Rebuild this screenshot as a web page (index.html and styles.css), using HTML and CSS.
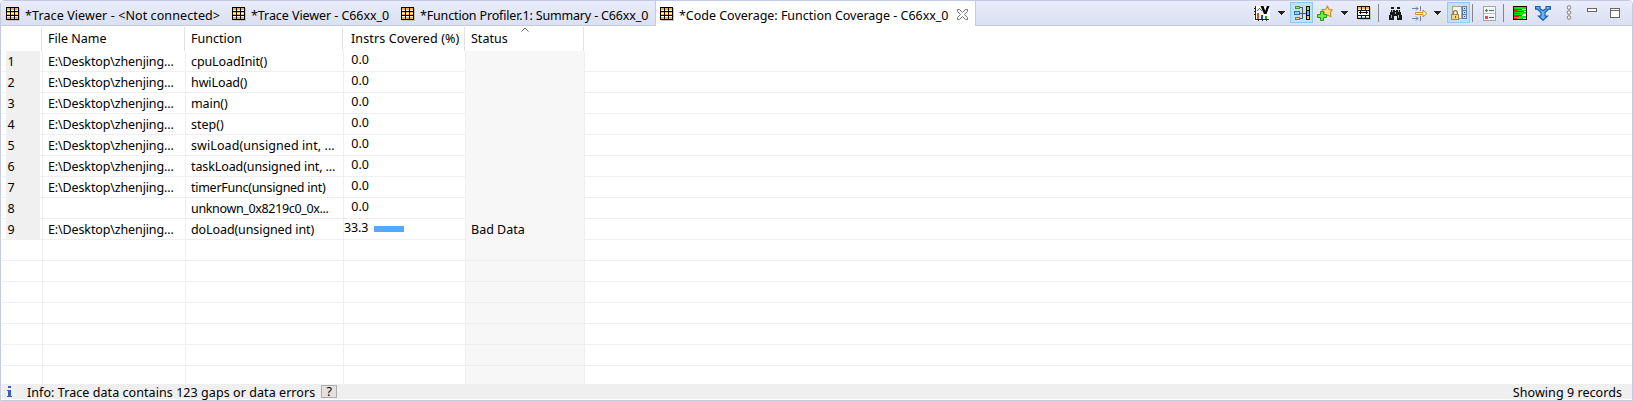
FILE: index.html
```html
<!DOCTYPE html>
<html lang="en">
<head>
<meta charset="utf-8">
<title>Code Coverage</title>
<link rel="stylesheet" href="styles.css">
</head>
<body>
<svg width="0" height="0" class="defs">
  <symbol id="table" viewBox="0 0 15 15"><path fill="#c9c3ba" d="M1 1h13v13H1z"/><path fill="#000" d="M0 0h13v13H0z"/><path fill="#fff" d="M1 1h3v3H1zM5 1h3v3H5zM9 1h3v3H9zM1 5h3v3H1zM5 5h3v3H5zM9 5h3v3H9zM1 9h3v3H1zM5 9h3v3H5zM9 9h3v3H9z"/><path fill="#f6b044" d="M1 1h3v2H1zM5 1h3v2H5zM9 1h3v2H9zM1 5h3v1H1zM5 5h3v1H5zM9 5h3v1H9zM1 7h3v1H1zM5 7h3v1H5zM9 7h3v1H9zM1 10h3v2H1zM5 10h3v2H5zM9 10h3v2H9z"/></symbol>
  <symbol id="down" viewBox="0 0 7 4"><path fill="#222" d="M0 0h7v1H6v1H5v1H4v1H3V3H2V2H1V1H0z"/></symbol>
</svg>
<div class="view">
  <div class="tabbar">
    <div class="tab t1"><svg class="ticon"><use href="#table"/></svg><span>*Trace Viewer - &lt;Not connected&gt;</span></div>
    <div class="tab t2"><svg class="ticon"><use href="#table"/></svg><span>*Trace Viewer - C66xx_0</span></div>
    <div class="tab t3"><svg class="ticon"><use href="#table"/></svg><span>*Function Profiler.1: Summary - C66xx_0</span></div>
    <div class="tab t4 active"><svg class="ticon"><use href="#table"/></svg><span>*Code Coverage: Function Coverage - C66xx_0</span>
      <svg class="close" viewBox="0 0 11 11"><path d="M.5.5h2l3 3 3-3h2v2l-3 3 3 3v2h-2l-3-3-3 3h-2v-2l3-3-3-3z" fill="#fff" stroke="#777"/></svg></div>
    <div class="tools">
      <svg class="i16 chart" viewBox="0 0 16 16"><path fill="#fff" d="M0 1h16v15H0z"/><path fill="#222" d="M1 1h1v13h13v1H1zM0 3h1v1H0zM0 6h1v1H0zM0 9h1v1H0zM4 15h1v1H4zM8 15h1v1H8zM12 15h1v1h-1z"/><path fill="#f04a10" d="M3 8h2v6H3z"/><path fill="#1648e8" d="M7 10h2v4H7z"/><path fill="#14b414" d="M11 11h2v3h-2z"/><path d="M2.500 6.500l3-3 3 3" fill="none" stroke="#3860a8"/><path class="smooth" fill="#000" d="M6.500 1h3l1.700 5L13 1h2.500l-3 8h-2.500z"/></svg>
      <svg class="arrow a1"><use href="#down"/></svg>
      <span class="pressed p1"><svg class="i16" viewBox="0 0 16 16"><path fill="none" stroke="#4a5560" d="M5 2.500h3.500v11H5M5 8.500h7"/><path fill="#3c9c28" d="M1 1h5v3H1z"/><path fill="#b8e060" d="M2 2h3v1H2z"/><path fill="#2878b0" d="M0 6h6v4H0z"/><path fill="#8bd4ff" d="M1 7h4v2H1z"/><path fill="#a47808" d="M1 12h5v3H1z"/><path fill="#ffe052" d="M2 13h3v1H2z"/><path fill="#111" d="M12 1h4v14h-4z"/><path fill="#84e058" d="M13 2h2v3h-2z"/><path fill="#57b6ff" d="M13 6h2v4h-2z"/><path fill="#ffd328" d="M13 11h2v3h-2z"/></svg></span>
      <svg class="i16 star smooth" viewBox="0 0 16 16"><path d="M10.500 1.200l1.500 3.300 3.200.5-2 2.800.8 3.900-3.500-1.500-3.500 1.500.4-4-2.500-3 3.800-.5z" fill="#ffe28a" stroke="#d38c1c" stroke-width="1.100"/><path d="M3.500 6.500h3v3h3v3h-3v3h-3v-3h-3v-3h3z" fill="#74e84d" stroke="#209a16"/></svg>
      <svg class="arrow a2"><use href="#down"/></svg>
      <svg class="i16 film" viewBox="0 0 16 16"><path fill="#c9c3ba" d="M1 1h13v13H1z"/><path fill="#111" d="M0 0h13v13H0z"/><path fill="#fff" d="M1 1h3v3H1zM5 1h3v3H5zM9 1h3v3H9zM1 10h3v2H1zM5 10h3v2H5zM9 10h3v2H9z"/><path fill="#f8b652" d="M1 1h3v2H1zM5 1h3v2H5zM9 1h3v2H9zM1 11h3v1H1zM5 11h3v1H5zM9 11h3v1H9z"/><path fill="#fff" d="M1 5h11v4H1z"/><path fill="#111" d="M2 6h9v1H2zM3 5h1v3H3zM9 5h1v3H9z"/></svg>
      <i class="sep s1"></i>
      <svg class="i16 bino" viewBox="0 0 16 16"><path fill="#181818" d="M2 0h3v2H2zM8 0h3v2H8zM2 3h4v1h1V3h4v2h1v3h1v5H8V9H5v4H0V8h1V5h1z"/><path fill="#aaa" d="M3 3h1v2H3zM9 3h1v2H9zM2 8h1v3H2zM9 8h1v3H9zM6 5h1v2H6z"/></svg>
      <svg class="i16 step smooth" viewBox="0 0 16 16"><path d="M0 3.500h6M0 13.500h6M4 1.500l2 2-2 2M4 11.500l2 2-2 2M8.500 1v5M8.500 11v5" fill="none" stroke="#70849c"/><path d="M3.500 7.500h7.500V5l4 3.500-4 3.500V9.500H3.500z" fill="#fff2b0" stroke="#c8912a"/></svg>
      <svg class="arrow a3"><use href="#down"/></svg>
      <span class="pressed p2"><svg class="i16" viewBox="0 0 16 16"><path fill="#a8a48c" d="M1 1h15v13H1z"/><path fill="#eef4fc" d="M2 2h8v11H2z"/><path fill="#fbfdff" d="M2 6h8v7H2z"/><path fill="#5f7ea8" d="M11 1h5v13h-5z"/><path fill="#c8dcf2" d="M12 2h3v3h-3zM12 6h3v3h-3zM12 10h3v3h-3z"/><path fill="#2d4a78" d="M13 3h1v1h-1zM13 7h1v1h-1zM13 11h1v1h-1z"/><path class="smooth" d="M2.500 9V7.500a1.900 1.900 0 0 1 3.800 0V9" fill="none" stroke="#a87020" stroke-width="1.300"/><path fill="#b88428" d="M0 9h8v6H0z"/><path fill="#f7d478" d="M1 10h6v4H1z"/><path fill="#805416" d="M4 11h1v2H4z"/></svg></span>
      <i class="sep s2"></i>
      <svg class="i16 list" viewBox="0 0 16 16"><path fill="#fff" stroke="#a9a68c" d="M.5.500h12v14H.5z"/><path fill="#b9bcae" d="M1 7h11v1H1z"/><path fill="#e8f1f8" d="M2 2h9v4H2zM2 9h9v5H2z"/><path fill="#36934a" d="M2 4h3v1H2zM3 3h1v3H3z"/><path fill="#d95448" d="M2 10h3v3H2z"/><path fill="#52697f" d="M6 4h5v1H6zM6 11h5v1H6z"/></svg>
      <i class="sep s3"></i>
      <svg class="i16 cover" viewBox="0 0 16 16"><path fill="#000" d="M0 0h14v14H0z"/><path fill="#00ec00" d="M1 1h12v12H1z"/><path fill="#f01818" d="M1 3h8v1H1zM1 4h3v1H1zM1 5h10v1H1zM1 7h6v1H1zM1 9h8v1H1zM1 10h5v1H1zM1 12h3v1H1z"/><path fill="#fff" d="M9 3h4v1H9zM11 5h2v1h-2zM10 8h3v1h-3zM9 9h4v1H9zM10 12h3v1h-3z"/></svg>
      <svg class="i16 fork smooth" viewBox="0 0 16 16"><path d="M.6 1.500h4.400v2.300L8 5.500l3-1.700V1.500h4.400v2.700h-2L10 7.500V11h2.500L8 15.300 3.500 11H6V7.500L2.600 4.200h-2z" fill="#66b9f8" stroke="#1b5da8" stroke-width="1.200"/></svg>
      <svg class="dots smooth" viewBox="0 0 6 15"><g fill="#fff" stroke="#777"><circle cx="3" cy="2.500" r="1.800"/><circle cx="3" cy="7.500" r="1.800"/><circle cx="3" cy="12.500" r="1.800"/></g></svg>
      <svg class="min" viewBox="0 0 10 4"><path d="M.5.500h9v3h-9z" fill="#fff" stroke="#666"/></svg>
      <svg class="max" viewBox="0 0 10 10"><path d="M.5.500h9v9h-9zM1 2.500h8" fill="#fff" stroke="#666"/></svg>
    </div>
  </div>
  <div class="thead">
    <div></div><div><span>File Name</span></div><div><span class="w-fn">Function</span></div><div><span class="w-ins">Instrs Covered (%)</span></div>
    <div><span>Status</span><svg class="sort" viewBox="0 0 8 5"><path d="M.5 4.500L4 1l3.500 3.500" fill="none" stroke="#666"/></svg></div>
  </div>
  <div class="tbody">
    <div class="row"><b>1</b><div class="file">E:\Desktop\zhenjing...</div><div class="k1">cpuLoadInit()</div><div class="num"><span>0.0</span></div><div></div></div>
    <div class="row"><b>2</b><div class="file">E:\Desktop\zhenjing...</div><div class="k1">hwiLoad()</div><div class="num"><span>0.0</span></div><div></div></div>
    <div class="row"><b>3</b><div class="file">E:\Desktop\zhenjing...</div><div class="k1">main()</div><div class="num"><span>0.0</span></div><div></div></div>
    <div class="row"><b>4</b><div class="file">E:\Desktop\zhenjing...</div><div>step()</div><div class="num"><span>0.0</span></div><div></div></div>
    <div class="row"><b>5</b><div class="file">E:\Desktop\zhenjing...</div><div class="k0">swiLoad(unsigned int, ...</div><div class="num"><span>0.0</span></div><div></div></div>
    <div class="row"><b>6</b><div class="file">E:\Desktop\zhenjing...</div><div class="k1">taskLoad(unsigned int, ...</div><div class="num"><span>0.0</span></div><div></div></div>
    <div class="row"><b>7</b><div class="file">E:\Desktop\zhenjing...</div><div class="k2">timerFunc(unsigned int)</div><div class="num"><span>0.0</span></div><div></div></div>
    <div class="row"><b>8</b><div></div><div class="k3">unknown_0x8219c0_0x...</div><div class="num"><span>0.0</span></div><div></div></div>
    <div class="row"><b>9</b><div class="file">E:\Desktop\zhenjing...</div><div class="k1">doLoad(unsigned int)</div><div class="num wide"><span>33.3</span><i class="bar" style="width:30px"></i></div><div>Bad Data</div></div>
    <div class="row"><em></em><div></div><div></div><div></div><div></div></div>
    <div class="row"><em></em><div></div><div></div><div></div><div></div></div>
    <div class="row"><em></em><div></div><div></div><div></div><div></div></div>
    <div class="row"><em></em><div></div><div></div><div></div><div></div></div>
    <div class="row"><em></em><div></div><div></div><div></div><div></div></div>
    <div class="row"><em></em><div></div><div></div><div></div><div></div></div>
    <div class="row"><em></em><div></div><div></div><div></div><div></div></div>
  </div>
  <div class="status">
    <svg class="info" viewBox="0 0 5 11"><path fill="#3a5fb4" d="M1 0h3v2H1zM0 4h4v6h1v1H0v-1h1V5H0z"/></svg>
    <span class="w-info">Info: Trace data contains 123 gaps or data errors</span><span class="help">?</span>
    <span class="count">Showing 9 records</span>
  </div>
</div>
</body>
</html>
```
FILE: styles.css
```css
* { box-sizing: border-box; }
body { margin: 0; background: #fff; font: 12.5px/16px "Noto Sans", "Open Sans", sans-serif; color: #000; overflow: hidden; }
.defs { display: none; }
svg { display: block; flex: none; shape-rendering: crispEdges; }
.smooth { shape-rendering: auto; }
.view { width: 1633px; height: 401px; border: 1px solid #c5cae0; border-radius: 4px 4px 0 0; padding: 0 0 1px 1px; display: flex; flex-direction: column; overflow: hidden; }
span { white-space: nowrap; }

.tabbar { display: flex; height: 25px; flex: none; margin-left: -1px; border-bottom: 1px solid #c5cae0; background: linear-gradient(#e9edfb, #dae0f2); }
.tab { display: flex; height: 25px; padding: 6px 0 0 5px; }
.tab span { margin-left: 4px; line-height: 17px; }
.ticon { width: 15px; height: 15px; }
.t1 { width: 226px; letter-spacing: .1px; }
.t2 { width: 169px; letter-spacing: -.07px; }
.t3 { width: 259px; letter-spacing: -.16px; }
.t4 { width: 321px; letter-spacing: -.02px; }
.active { background: #fff; border: solid #c5cae0; border-width: 0 1px; padding-left: 4px; }
.close { width: 11px; height: 11px; margin: 2px 0 0 8px; shape-rendering: auto; }

.tools { display: flex; align-items: flex-start; margin-left: auto; padding-right: 12px; }
.i16 { width: 16px; height: 16px; }
.chart { margin-top: 4px; }
.arrow { width: 7px; height: 4px; margin-top: 10px; }
.a1 { margin-left: 8px; }
.pressed { width: 23px; height: 21px; border: 1px solid #90c8f6; background: #c4e0f9; padding: 2px 3px; margin-top: 1px; }
.p1 { margin-left: 5px; }
.star { margin: 4px 0 0 4px; }
.a2 { margin-left: 8px; }
.film { margin: 5px 0 0 9px; }
.sep { width: 1px; height: 18px; margin-top: 3px; background: #85868c; }
.s1 { margin-left: 5px; }
.bino { margin: 6px 0 0 10px; }
.step { margin: 4px 0 0 7px; }
.a3 { margin-left: 6px; }
.p2 { margin-left: 6px; }
.s2 { margin-left: 2px; }
.list { margin: 5px 0 0 10px; }
.s3 { margin-left: 4px; }
.cover { margin: 5px 0 0 9px; }
.fork { margin: 4px 0 0 6px; }
.dots { width: 6px; height: 15px; margin: 4px 0 0 15px; }
.min { width: 10px; height: 4px; margin: 7px 0 0 15px; }
.max { width: 10px; height: 10px; margin: 7px 0 0 13px; }

.thead { display: grid; grid-template-columns: 40px 143px 158px 122px 119px; height: 25px; flex: none; padding-top: 1px; }
.thead div { border-right: 1px solid #e2e2e2; padding: 4px 0 0 6px; position: relative; }
.thead div:nth-child(4) { padding-left: 8px; }
.w-ins { letter-spacing: .12px; }
.sort { position: absolute; left: 56px; top: 0; width: 8px; height: 5px; shape-rendering: auto; }

.tbody { flex: 1; min-height: 0; overflow: hidden; }
.row { display: grid; grid-template-columns: 41px 143px 158px 122px 119px; height: 21px; border-bottom: 1px solid #efefef; }
.row > div { border-right: 1px solid #efefef; padding: 3px 0 0 5px; white-space: nowrap; overflow: hidden; }
.row > div:nth-child(5) { background: #f7f7f7; }
.row b { font-weight: 400; background: #f0f0f0; height: 21px; margin: 0 3px 0 4px; padding: 3px 0 0 1.5px; }
.row > :nth-child(2) { border-left: 1px solid #efefef; margin-left: -1px; }
.row > .file { letter-spacing: -.13px; }
.k0 { letter-spacing: .08px; }
.k1 { letter-spacing: -.1px; }
.k2 { letter-spacing: -.27px; }
.k3 { letter-spacing: -.35px; }
.row > .num { display: flex; padding: 1px 0 0; }
.num span { width: 25px; text-align: right; }
.wide span { letter-spacing: -.1px; width: 24px; }
.bar { height: 6px; background: #54a8ff; margin: 6px 0 0 5px; }
.wide .bar { margin-left: 6px; }

.status { display: flex; height: 15px; flex: none; background: #efefef; padding-right: 10px; }
.status span { line-height: 18px; }
.info { width: 5px; height: 11px; margin: 2px 0 0 5px; }
.w-info { margin-left: 15px; letter-spacing: .065px; }
.status .help { width: 16px; height: 13px; margin: 1px 0 0 6px; border: 1px solid #adadad; background: #e1e1e1; text-align: center; line-height: 12px; }
.count { margin-left: auto; letter-spacing: .06px; }
```
